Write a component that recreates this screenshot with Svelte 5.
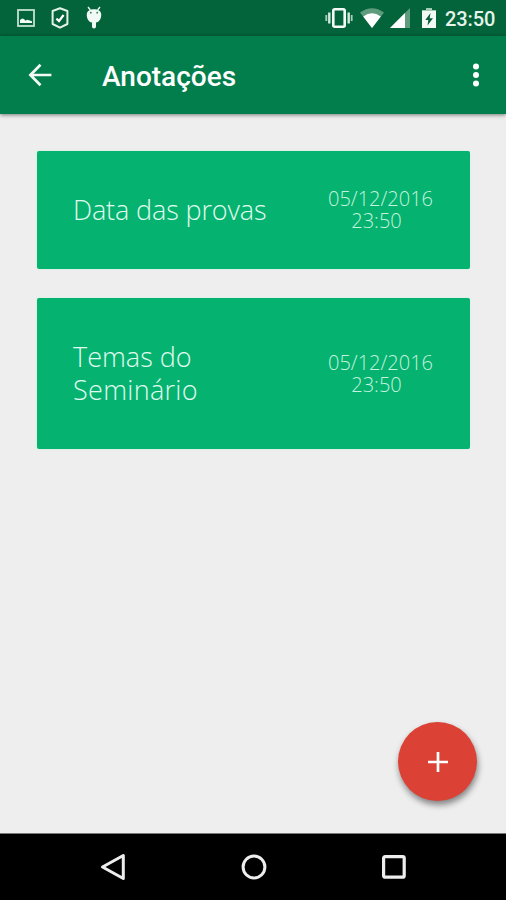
<script>
  const notes = [
    { lines: [{ text: 'Data das provas', spacing: -0.13 }], date: '05/12/2016', time: '23:50', height: 118 },
    { lines: [{ text: 'Temas do', spacing: 0 }, { text: 'Seminário', spacing: 0.3 }], date: '05/12/2016', time: '23:50', height: 151 }
  ];
</script>

<div class="screen">
  <div class="status">
    <div class="left">
      <svg width="18" height="18" viewBox="0 0 18 18">
        <rect x="1" y="1" width="16" height="16" fill="none" stroke="#c3e0cf" stroke-width="1.8" />
        <path d="M3 14V11l2-1.5 2 .6 1.5 1.7 1.5-1 2 .4 3 1V14z" fill="#f3fbf6" />
      </svg>
      <svg width="18" height="22" viewBox="0 0 18 22">
        <path d="M9 1.3 16.4 4v13L9 20.7 1.6 17V4z" fill="none" stroke="#e3f2e9" stroke-width="2" stroke-linejoin="round" />
        <path d="M5.4 11.6 8 14l4.6-6" fill="none" stroke="#fff" stroke-width="2.2" />
      </svg>
      <svg width="18" height="24" viewBox="0 0 18 24">
        <path d="M3 1l2.4 3M15 1l-2.4 3" stroke="#eef8f2" stroke-width="1.4" />
        <path d="M1.8 8C2 5 5 3.2 9 3.2S16 5 16.2 8c.3 4.5-1.8 8-5.2 8.6v4a2 2 0 0 1-4 0v-4C3.600 16 1.500 12.500 1.800 8z" fill="#f1faf4" />
        <circle cx="5.800" cy="6.700" r=".9" fill="#347b56" />
        <circle cx="12.200" cy="6.700" r=".9" fill="#347b56" />
      </svg>
    </div>
    <div class="right">
      <svg class="vibrate" width="28" height="20" viewBox="0 0 28 20">
        <rect x="8.300" y="1.300" width="11.400" height="17.400" rx="1.500" fill="none" stroke="#f5fbf7" stroke-width="2.600" />
        <path d="M1.300 7v6M26.700 7v6" stroke="#a9cfba" stroke-width="1.800" />
        <path d="M4.300 4.500v11M23.700 4.500v11" stroke="#d5eadd" stroke-width="2.400" />
      </svg>
      <svg class="wifi" width="24" height="20" viewBox="0 0 24 20">
        <path d="M0 4.500Q12-4 24 4.500L12 20z" fill="#5f9c7d" />
        <path d="M3.200 8.500Q12 1.800 20.800 8.500L12 20z" fill="#fff" />
      </svg>
      <svg class="signal" width="20" height="20" viewBox="0 0 20 20">
        <path d="M0 20 20 0v20z" fill="#5f9c7d" />
        <path d="M0 20 15 5v15z" fill="#fff" />
      </svg>
      <svg class="battery" width="14" height="20" viewBox="0 0 14 20">
        <path d="M4 0h6v2h4v4H0V2h4z" fill="#a3cbb4" />
        <path d="M0 3h14v17H0z" fill="#f3faf5" />
        <path d="M8.500 5 3.300 12h3L5.500 17.500 11 10.300H7.700z" fill="#075f3a" />
      </svg>
      <span class="clock">23:50</span>
    </div>
  </div>

  <header>
    <svg class="back" width="24" height="24" viewBox="0 0 24 24" fill="none" stroke="#f4fbf7" stroke-width="2.700">
      <path d="M12.500 1.700 2.400 12l10.100 10.300M2.400 12h21" />
    </svg>
    <h1>Anotações</h1>
    <svg class="more" width="8" height="24" viewBox="0 0 8 24" fill="#fff">
      <circle cx="4" cy="3.500" r="3" /><circle cx="4" cy="12" r="3" /><circle cx="4" cy="20.500" r="3" />
    </svg>
  </header>

  <main>
    {#each notes as note}
      <article style="height: {note.height}px">
        <div class="title">
          {#each note.lines as line}<div style="letter-spacing: {line.spacing}px">{line.text}</div>{/each}
        </div>
        <div class="when"><div>{note.date}</div><div class="time">{note.time}</div></div>
      </article>
    {/each}
    <button class="fab" aria-label="+">
      <svg width="20" height="20" viewBox="0 0 20 20" stroke="#fff" stroke-width="2.700"><path d="M10 0v20M0 10h20" /></svg>
    </button>
  </main>

  <nav>
    <svg width="26" height="28" viewBox="0 0 26 28" fill="none" stroke="#eee" stroke-width="3" stroke-linejoin="round"><path d="M2.500 14 23.300 2.500v23z" /></svg>
    <svg width="26" height="26" viewBox="0 0 26 26" fill="none" stroke="#eee" stroke-width="3"><circle cx="13" cy="13" r="10.900" /></svg>
    <svg width="26" height="26" viewBox="0 0 26 26" fill="none" stroke="#eee" stroke-width="3.200"><rect x="2.600" y="2.600" width="20.600" height="20.600" rx="1.500" /></svg>
  </nav>
</div>

<style>
  .screen {
    width: 506px;
    height: 900px;
    display: flex;
    flex-direction: column;
    background: #eee;
    font-family: Roboto, sans-serif;
    overflow: hidden;
  }
  svg { display: block; flex: none; }
  .status {
    height: 36px;
    flex: none;
    display: flex;
    justify-content: space-between;
    align-items: center;
    background: #03633a;
    padding: 0 11px 0 17px;
  }
  .left { display: flex; align-items: center; gap: 16px; }
  .right { display: flex; align-items: center; }
  .wifi { margin-left: 7px; }
  .signal { margin-left: 6px; }
  .battery { margin-left: 12px; }
  .clock {
    width: 50px;
    margin-left: 9px;
    color: #e6f4eb;
    font-size: 20px;
    font-weight: 500;
    letter-spacing: -0.1px;
    line-height: 36px;
    white-space: nowrap;
    padding-top: 1px;
  }
  header {
    height: 78px;
    flex: none;
    display: flex;
    align-items: center;
    background: #027e4d;
    box-shadow: 0 1px 4px rgba(0, 0, 0, .5);
    box-sizing: border-box;
    padding: 0 26px 0 28px;
    position: relative;
  }
  h1 {
    margin: 3px 0 0 50px;
    flex: 1;
    color: #fff;
    font-size: 28px;
    font-weight: 500;
    line-height: 34px;
  }
  main {
    position: relative;
    flex: 1;
    display: flex;
    flex-direction: column;
    gap: 29px;
    padding: 37px 36px 0 37px;
  }
  article {
    flex: none;
    box-sizing: border-box;
    display: flex;
    align-items: center;
    justify-content: space-between;
    background: #05b270;
    border-radius: 2px;
    box-shadow: 0 0 2px #b9f3d9;
    padding: 0 36px;
    font-family: "Open Sans", sans-serif;
    font-weight: 300;
  }
  .title { color: #e0fbef; font-size: 27px; line-height: 33px; white-space: nowrap; padding-bottom: 2px; }
  .when { color: #c4f3dd; font-size: 20px; line-height: 22px; width: 107px; text-align: center; }
  .time { padding-right: 8px; }
  .fab {
    position: absolute;
    right: 29px;
    bottom: 32px;
    width: 79px;
    height: 79px;
    border: 0;
    border-radius: 50%;
    padding: 0;
    background: #db4135;
    box-shadow: 1px 4px 6px rgba(0, 0, 0, .45);
    display: flex;
    align-items: center;
    justify-content: center;
  }
  nav {
    height: 67px;
    flex: none;
    box-sizing: border-box;
    border-top: 1px solid #777;
    background: #000;
    display: flex;
    align-items: center;
    justify-content: space-between;
    padding: 0 99px 0 100px;
  }
</style>
